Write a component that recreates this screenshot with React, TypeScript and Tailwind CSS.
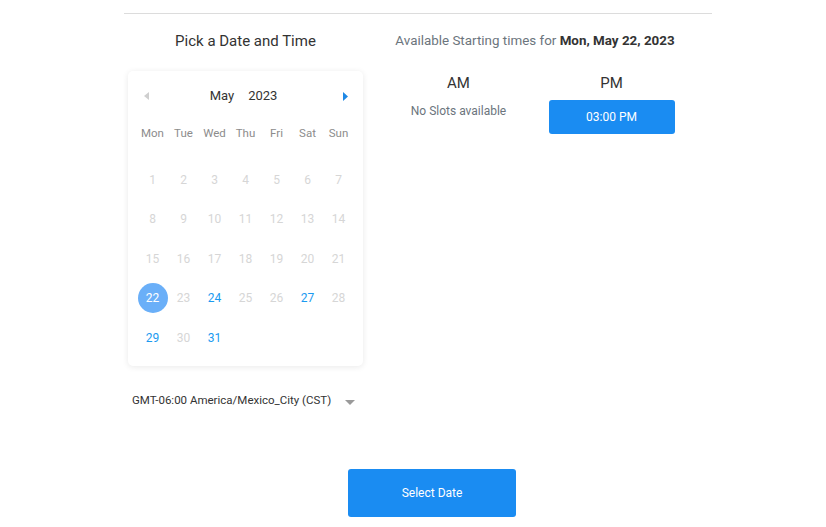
import React from "react";

const weekdays = ["Mon", "Tue", "Wed", "Thu", "Fri", "Sat", "Sun"];

type Day = { n: number; state: "off" | "on" | "sel" } | null;

const rows: Day[][] = [
  [1, 2, 3, 4, 5, 6, 7].map((n) => ({ n, state: "off" as const })),
  [8, 9, 10, 11, 12, 13, 14].map((n) => ({ n, state: "off" as const })),
  [15, 16, 17, 18, 19, 20, 21].map((n) => ({ n, state: "off" as const })),
  [
    { n: 22, state: "sel" },
    { n: 23, state: "off" },
    { n: 24, state: "on" },
    { n: 25, state: "off" },
    { n: 26, state: "off" },
    { n: 27, state: "on" },
    { n: 28, state: "off" },
  ],
  [
    { n: 29, state: "on" },
    { n: 30, state: "off" },
    { n: 31, state: "on" },
    null,
    null,
    null,
    null,
  ],
];

export default function App() {
  return (
    <div
      className="w-[826px] h-[527px] bg-white overflow-hidden text-[#333]"
      style={{ fontFamily: "Roboto, 'Liberation Sans', sans-serif" }}
    >
      <div className="ml-[124px] mt-[13px] w-[588px] h-px bg-[#dcdcdc]" />
      <div className="flex ml-[128px]">
        {/* Left column */}
        <div className="w-[235px] flex flex-col">
          <div className="mt-[17px] h-[20px] leading-[20px] text-[15px] text-center text-[#333]">
            Pick a Date and Time
          </div>
          <div className="mt-[20px] w-[235px] rounded-[5px] bg-white shadow-[0_1px_6px_rgba(0,0,0,0.09)] px-[9px] pb-[8px]">
            <div className="mt-[10px] h-[30px] flex items-center">
              <div className="w-[18px] flex justify-center">
                <svg width="5" height="8" viewBox="0 0 5 8">
                  <path d="M5 0 L0 4 L5 8 Z" fill="#cfcfcf" />
                </svg>
              </div>
              <div className="flex-1 flex justify-center items-center gap-[14px] text-[13px] text-[#333] pr-[4px]">
                <span>May</span>
                <span>2023</span>
              </div>
              <div className="w-[18px] flex justify-center">
                <svg width="5" height="9" viewBox="0 0 5 9">
                  <path d="M0 0 L5 4.5 L0 9 Z" fill="#1e88e5" />
                </svg>
              </div>
            </div>
            <div className="mt-[13px] grid grid-cols-7 h-[20px] items-center text-[11.5px] text-[#8c8c8c]">
              {weekdays.map((w) => (
                <div key={w} className="text-center">
                  {w}
                </div>
              ))}
            </div>
            <div className="mt-[16px]">
              {rows.map((r, i) => (
                <div key={i} className="grid grid-cols-7 h-[39.5px] items-center">
                  {r.map((d, j) => (
                    <div key={j} className="flex justify-center items-center">
                      {d &&
                        (d.state === "sel" ? (
                          <div className="w-[30px] h-[30px] rounded-full bg-[#6aaff8] text-white text-[12px] flex items-center justify-center">
                            {d.n}
                          </div>
                        ) : (
                          <span
                            className={
                              d.state === "on"
                                ? "text-[12px] text-[#1b9af0]"
                                : "text-[12px] text-[#d6d6d6]"
                            }
                          >
                            {d.n}
                          </span>
                        ))}
                    </div>
                  ))}
                </div>
              ))}
            </div>
          </div>
          <div className="mt-[25px] h-[20px] flex items-center pl-[4px] text-[11.5px] text-[#333] whitespace-nowrap">
            <span>GMT-06:00 America/Mexico_City (CST)</span>
            <svg className="ml-[14px] mt-[3px]" width="10" height="5" viewBox="0 0 10 5">
              <path d="M0 0 L10 0 L5 5 Z" fill="#9a9a9a" />
            </svg>
          </div>
        </div>
        {/* Right column */}
        <div className="ml-[19px] w-[306px] flex flex-col">
          <div className="mt-[17px] h-[20px] leading-[20px] text-[13.4px] text-center text-[#6c757d] whitespace-nowrap">
            Available Starting times for{" "}
            <span className="font-bold text-[#333]">Mon, May 22, 2023</span>
          </div>
          <div className="flex mt-[22px]">
            <div className="w-[153px] flex flex-col items-center">
              <div className="h-[20px] leading-[20px] text-[15px] text-[#333]">AM</div>
              <div className="mt-[10px] h-[16px] leading-[16px] text-[12px] text-[#6c757d]">
                No Slots available
              </div>
            </div>
            <div className="w-[153px] flex flex-col items-center">
              <div className="h-[20px] leading-[20px] text-[15px] text-[#333]">PM</div>
              <button className="mt-[7px] w-[126px] h-[34px] rounded-[3px] bg-[#1a8cf2] text-white text-[12px] flex items-center justify-center">
                03:00 PM
              </button>
            </div>
          </div>
        </div>
      </div>
      <div className="ml-[348px] mt-[58px]">
        <button className="w-[168px] h-[48px] rounded-[3px] bg-[#1a8cf2] text-white text-[12px] flex items-center justify-center">
          Select Date
        </button>
      </div>
    </div>
  );
}
